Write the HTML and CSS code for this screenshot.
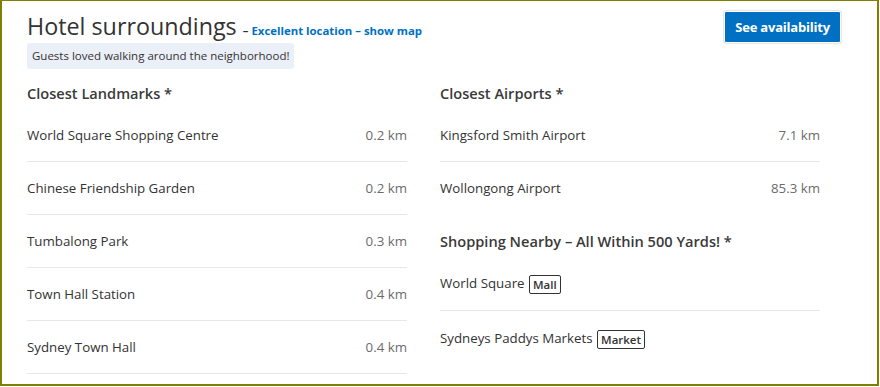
FILE: index.html
```html
<!DOCTYPE html>
<html>

<head>
	<meta charset="utf-8">
	<meta name="viewport" content="width=device-width, initial-scale=1">
	<title>Hotel surroundings</title>
	<link rel="stylesheet" href="styles.css">
</head>

<body>
	<div class="frame">
		<div class="top">
			<div class="intro">
				<h2 class="title">Hotel surroundings <span class="sub">&ndash; <a href="#">Excellent location &ndash; show map</a></span></h2>
				<span class="badge">Guests loved walking around the neighborhood!</span>
			</div>
			<button class="btn" type="button">See availability</button>
		</div>

		<div class="cols">
			<section class="col">
				<h3>Closest Landmarks *</h3>
				<ul class="list lined">
					<li><span>World Square Shopping Centre</span><span class="dist">0.2 km</span></li>
					<li><span>Chinese Friendship Garden</span><span class="dist">0.2 km</span></li>
					<li><span>Tumbalong Park</span><span class="dist">0.3 km</span></li>
					<li><span>Town Hall Station</span><span class="dist">0.4 km</span></li>
					<li><span>Sydney Town Hall</span><span class="dist">0.4 km</span></li>
				</ul>
			</section>

			<section class="col">
				<h3>Closest Airports *</h3>
				<ul class="list">
					<li><span>Kingsford Smith Airport</span><span class="dist">7.1 km</span></li>
					<li><span>Wollongong Airport</span><span class="dist">85.3 km</span></li>
				</ul>

				<h3 class="next">Shopping Nearby &ndash; All Within 500 Yards! *</h3>
				<ul class="list shops">
					<li><span>World Square <span class="tag">Mall</span></span></li>
					<li><span>Sydneys Paddys Markets <span class="tag">Market</span></span></li>
				</ul>
			</section>
		</div>
	</div>
</body>

</html>
```

FILE: styles.css
```css
* {
	box-sizing: border-box;
}

body {
	margin: 0;
	background-color: white;
	font-family: "Open Sans", "Noto Sans", sans-serif;
	color: #333;
}

.frame {
	width: 879px;
	height: 387px;
	margin-top: -1px;
	border: 2px solid #808000;
	padding: 10px 36px 0 25px;
	overflow: hidden;
}

.top {
	display: flex;
	justify-content: space-between;
	align-items: flex-start;
}

.title {
	margin: 0;
	font-size: 23.3px;
	font-weight: 400;
	line-height: 30px;
	color: #333;
}

.sub {
	font-size: 11.4px;
	font-weight: 700;
	line-height: 1;
}

.sub a {
	color: #0071c2;
	text-decoration: none;
}

.badge {
	display: inline-block;
	margin-top: 2px;
	padding: 4px 5px;
	font-size: 11.5px;
	line-height: 18px;
	background-color: #ebeff7;
	border-radius: 3px;
}

.btn {
	padding: 0 10px;
	height: 32px;
	font-family: inherit;
	font-size: 13px;
	font-weight: 700;
	letter-spacing: -0.2px;
	color: white;
	background-color: #0071c2;
	border: 1px solid white;
	border-radius: 2px;
	box-shadow: 0 0 2px rgba(0, 0, 0, 0.35);
	cursor: pointer;
}

.cols {
	display: flex;
	gap: 33px;
	margin-top: 14px;
}

.col {
	width: 380px;
}

.col h3 {
	margin: 0 0 6px;
	font-size: 14.6px;
	font-weight: 550;
	line-height: 20px;
	color: #3a3a3a;
}

.col h3.next {
	margin-top: 17px;
	margin-bottom: 5px;
}

.list {
	list-style: none;
	margin: 0;
	padding: 0;
}

.list li {
	display: flex;
	justify-content: space-between;
	padding: 16px 0;
	font-size: 13.3px;
	line-height: 20px;
	border-bottom: 1px solid #e7e7e7;
}

.list li:last-child {
	border-bottom: none;
}

.list.lined li:last-child {
	border-bottom: 1px solid #e7e7e7;
}

.list.shops li {
	line-height: 22px;
}

.dist {
	color: #6b6b6b;
}

.tag {
	display: inline-block;
	margin-left: 1px;
	padding: 0 3px;
	font-size: 11.5px;
	font-weight: 550;
	line-height: 17px;
	border: 1px solid #333;
	border-radius: 2px;
	vertical-align: middle;
}
```
